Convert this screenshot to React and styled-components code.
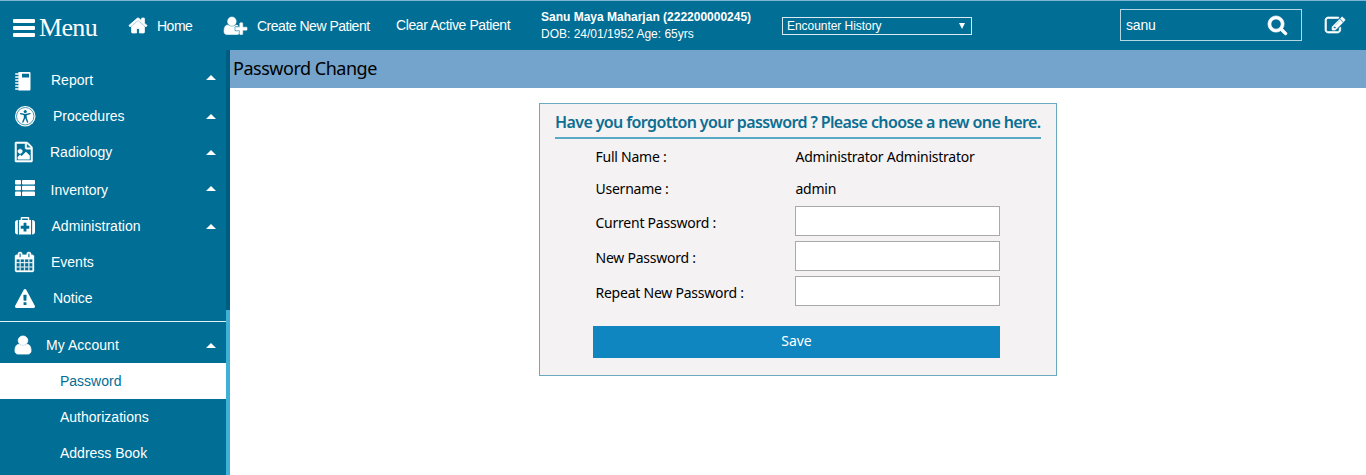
import React from "react";
import styled, { createGlobalStyle } from "styled-components";

const Global = createGlobalStyle`
  * { box-sizing: border-box; }
  body { margin: 0; background: #fff; font-family: "Liberation Sans", Arial, sans-serif; font-size: 14px; color: #000; }
`;

const uiFont = `"Noto Sans", "Open Sans", sans-serif`;

const Page = styled.div`
  display: flex;
  flex-direction: column;
  height: 475px;
  overflow: hidden;
`;

const Header = styled.header`
  display: flex;
  flex: 0 0 50px;
  height: 50px;
  align-items: flex-start;
  background: #006e95;
  border-top: 1px solid #7fb5d3;
  color: #fff;
  white-space: nowrap;
`;

const HeaderItem = styled.a`
  display: flex;
  align-items: center;
  height: 50px;
  width: ${(p) => p.$width}px;
  padding-left: ${(p) => p.$indent || 0}px;
  gap: ${(p) => p.$gap || 0}px;
  flex: none;
  letter-spacing: -0.49px;
`;

const MenuToggle = styled(HeaderItem)`
  font-family: "Liberation Serif", "Times New Roman", serif;
  font-size: 26px;
  letter-spacing: -0.65px;
  height: 54px;
`;

const HomeLink = styled(HeaderItem)`
  height: 49px;
`;

const ClearLink = styled(HeaderItem)`
  height: 48px;
  letter-spacing: -0.4px;
`;

const PatientInfo = styled.div`
  width: 241px;
  flex: none;
  padding-top: 8px;
  font-size: 12px;
  line-height: 17px;
`;

const PatientName = styled.div`
  font-weight: bold;
`;

const Encounter = styled.div`
  display: flex;
  align-items: center;
  justify-content: space-between;
  flex: none;
  width: 190px;
  height: 18px;
  margin-top: 16px;
  padding: 0 6px 0 4px;
  border: 1px solid #d9eaf1;
  font-size: 12px;
  letter-spacing: -0.05px;
`;

const SearchBox = styled.div`
  display: flex;
  align-items: center;
  justify-content: space-between;
  flex: none;
  width: 182px;
  height: 32px;
  margin: 8px 23px 0 148px;
  padding: 0 14px 0 5px;
  border: 1px solid #b5d6e3;
  letter-spacing: -0.2px;
`;

const EditLink = styled.a`
  display: flex;
  padding-top: 16px;
`;

const Glyph = styled.svg`
  display: block;
  flex: none;
  fill: currentColor;
  overflow: visible;
`;

const Body = styled.div`
  display: flex;
  flex: 1;
  min-height: 0;
`;

const Sidebar = styled.nav`
  width: 226px;
  flex: none;
  padding-top: 12px;
  background: #006e95;
  color: #fff;
`;

const ScrollTrack = styled.div`
  width: 4px;
  flex: none;
  background: #005d82;
  padding-top: 260px;
`;

const ScrollThumb = styled.div`
  height: 165px;
  background: #3fb0d8;
`;

const NavRow = styled.a`
  display: flex;
  align-items: center;
  height: ${(p) => p.$height || 36}px;
  padding: ${(p) => p.$top || 0}px 10px ${(p) => p.$bottom || 0}px 15px;
`;

const IconSlot = styled.span`
  display: flex;
  flex: none;
  width: ${(p) => p.$width}px;
  margin-top: ${(p) => p.$shift || 0}px;
`;

const NavLabel = styled.span`
  flex: 1;
  letter-spacing: ${(p) => p.$spacing || 0}px;
`;

const Caret = styled.span`
  width: 0;
  height: 0;
  margin-top: ${(p) => p.$shift || 0}px;
  border: 5px solid transparent;
  border-top-width: 0;
  border-bottom: 5px solid #fff;
`;

const Divider = styled.div`
  height: 1px;
  margin: 5px 0 6px;
  background: #e6f2f6;
`;

const SubItem = styled.a`
  display: flex;
  align-items: center;
  height: 36px;
  padding-left: 60px;
  background: ${(p) => (p.$active ? "#fff" : "transparent")};
  color: ${(p) => (p.$active ? "#006e95" : "#fff")};
`;

const Main = styled.main`
  flex: 1;
  font-family: ${uiFont};
`;

const TitleBar = styled.h1`
  height: 38px;
  margin: 0;
  padding-left: 3px;
  background: #74a3cb;
  font-size: 18px;
  font-weight: 400;
  line-height: 37px;
  letter-spacing: -0.48px;
`;

const Card = styled.form`
  width: 518px;
  height: 273px;
  margin: 15px 0 0 309px;
  padding: 0 15px;
  background: #f4f2f3;
  border: 1px solid #6aa9c0;
`;

const CardTitle = styled.h2`
  height: 35px;
  margin: 0 0 1px;
  border-bottom: 2px solid #5aa9c5;
  color: #0b6e92;
  font-size: 16px;
  font-weight: 600;
  line-height: 37px;
  letter-spacing: -0.61px;
  white-space: nowrap;
`;

const Field = styled.div`
  display: flex;
  align-items: center;
  height: ${(p) => p.$height}px;
  padding-left: 40.5px;
  letter-spacing: -0.24px;
`;

const FieldLabel = styled.label`
  width: ${(p) => p.$width || 199.5}px;
  padding-top: ${(p) => p.$drop || 0}px;
  flex: none;
`;

const Input = styled.input`
  width: 205px;
  height: 30px;
  margin-bottom: 2px;
  border: 1px solid #a9a9a9;
  background: #fff;
`;

const SaveButton = styled.button`
  display: block;
  width: 407px;
  height: 32px;
  margin: 17px 0 0 38px;
  padding: 0 0 3px;
  border: 0;
  background: #0f86bf;
  color: #fff;
  font: 14px ${uiFont};
`;

const paths = {
  home: "M1472 992v480q0 26-19 45t-45 19h-384v-384h-256v384h-384q-26 0-45-19t-19-45v-480q0-1 .5-3t.5-3l575-474 575 474q1 2 1 6zm223-69l-62 74q-8 9-21 11h-3q-13 0-21-7l-692-577-692 577q-12 8-24 7-13-2-21-11l-62-74q-8-10-7-23.5t11-21.5l719-599q32-26 76-26t76 26l244 204v-195q0-14 9-23t23-9h192q14 0 23 9t9 23v408l219 182q10 8 11 21.5t-7 23.5z",
  userPlus: "M704 896q-159 0-271.5-112.5t-112.5-271.5 112.5-271.5 271.5-112.5 271.5 112.5 112.5 271.5-112.5 271.5-271.5 112.5zm960 128h352q13 0 22.5 9.5t9.5 22.5v192q0 13-9.5 22.5t-22.5 9.5h-352v352q0 13-9.5 22.5t-22.5 9.5h-192q-13 0-22.5-9.5t-9.5-22.5v-352h-352q-13 0-22.5-9.5t-9.5-22.5v-192q0-13 9.5-22.5t22.5-9.5h352v-352q0-13 9.5-22.5t22.5-9.5h192q13 0 22.5 9.5t9.5 22.5v352zm-736 224q0 52 38 90t90 38h256v238q-68 50-171 50h-874q-121 0-194-69t-73-190q0-53 3.5-103.5t14-109 26.5-108.5 43-97.5 62-81 85.5-53.5 111.5-20q19 0 39 17 79 61 154.5 91.5t164.5 30.5 164.5-30.5 154.5-91.5q20-17 39-17 132 0 217 96h-223q-52 0-90 38t-38 90v192z",
  search: "M1216 832q0-185-131.5-316.5t-316.5-131.5-316.5 131.5-131.5 316.5 131.5 316.5 316.5 131.5 316.5-131.5 131.5-316.5zm512 832q0 52-38 90t-90 38q-54 0-90-38l-343-342q-179 124-399 124-143 0-273.5-55.5t-225-150-150-225-55.5-273.5 55.5-273.5 150-225 225-150 273.5-55.5 273.5 55.5 225 150 150 225 55.5 273.5q0 220-124 399l343 343q37 37 37 90z",
  edit: "M888 1184l116-116-152-152-116 116v56h96v96h56zm440-720q-16-16-33 1l-350 350q-17 17-1 33t33-1l350-350q17-17 1-33zm80 594v190q0 119-84.5 203.5t-203.5 84.5h-832q-119 0-203.5-84.5t-84.5-203.5v-832q0-119 84.5-203.5t203.5-84.5h832q63 0 117 25 15 7 18 23 3 17-9 29l-49 49q-14 14-32 8-23-6-45-6h-832q-66 0-113 47t-47 113v832q0 66 47 113t113 47h832q66 0 113-47t47-113v-126q0-13 9-22l64-64q15-15 35-7t20 29zm-96-738l288 288-672 672h-288v-288zm444 132l-92 92-288-288 92-92q28-28 68-28t68 28l152 152q28 28 28 68t-28 68z",
  medkit: "M1280 1120v-192q0-14-9-23t-23-9h-224v-224q0-14-9-23t-23-9h-192q-14 0-23 9t-9 23v224h-224q-14 0-23 9t-9 23v192q0 14 9 23t23 9h224v224q0 14 9 23t23 9h192q14 0 23-9t9-23v-224h224q14 0 23-9t9-23zM640 384h512v-128h-512v128zM256 384v1280h-32q-92 0-158-66t-66-158v-832q0-92 66-158t158-66h32zM1440 384v1280h-1088v-1280h160v-160q0-40 28-68t68-28h576q40 0 68 28t28 68v160h160zM1792 608v832q0 92-66 158t-158 66h-32v-1280h32q92 0 158 66t66 158z",
  warning: "M1024 1375v-190q0-14-9.5-23.5t-22.5-9.5h-192q-13 0-22.5 9.5t-9.5 23.5v190q0 14 9.5 23.5t22.5 9.5h192q13 0 22.5-9.5t9.5-23.5zm-2-374l18-459q0-12-10-19-13-11-24-11h-220q-11 0-24 11-10 7-10 21l17 457q0 10 10 16.5t24 6.5h185q14 0 23.5-6.5t10.5-16.5zm-14-934l768 1408q35 63-2 126-17 29-46.5 46t-63.5 17h-1536q-34 0-63.5-17t-46.5-46q-37-63-2-126l768-1408q17-31 47-49t65-18 65 18 47 49z",
  calendar: "M192 1664h288v-288h-288v288zm352 0h320v-288h-320v288zm-352-352h288v-320h-288v320zm352 0h320v-320h-320v320zm-352-384h288v-288h-288v288zm736 736h320v-288h-320v288zm-384-736h320v-288h-320v288zm768 736h288v-288h-288v288zm-384-352h320v-320h-320v320zm-352-864v-288q0-13-9.5-22.5t-22.5-9.5h-64q-13 0-22.5 9.5t-9.5 22.5v288q0 13 9.5 22.5t22.5 9.5h64q13 0 22.5-9.5t9.5-22.5zm736 864h288v-320h-288v320zm-384-384h320v-288h-320v288zm384 0h288v-288h-288v288zm32-480v-288q0-13-9.5-22.5t-22.5-9.5h-64q-13 0-22.5 9.5t-9.5 22.5v288q0 13 9.5 22.5t22.5 9.5h64q13 0 22.5-9.5t9.5-22.5zm384-64v1280q0 52-38 90t-90 38h-1408q-52 0-90-38t-38-90v-1280q0-52 38-90t90-38h128v-96q0-66 47-113t113-47h64q66 0 113 47t47 113v96h384v-96q0-66 47-113t113-47h64q66 0 113 47t47 113v96h128q52 0 90 38t38 90z",
  image: "M1596 380q28 28 48 76t20 88v1152q0 40-28 68t-68 28h-1344q-40 0-68-28t-28-68v-1600q0-40 28-68t68-28h896q40 0 88 20t76 48zm-444-244v376h376q-10-29-22-41l-313-313q-12-12-41-22zm384 1528v-1024h-416q-40 0-68-28t-28-68v-416h-768v1536h1280zm-128-448v320h-1024v-192l192-192 128 128 384-384zm-832-192q-80 0-136-56t-56-136 56-136 136-56 136 56 56 136-56 136-136 56z",
  user: "M1536 1399q0 109-62.5 187t-150.5 78h-854q-88 0-150.5-78t-62.5-187q0-85 8.5-160.5t31.5-152 58.5-131 94-89 134.5-34.5q131 128 313 128t313-128q76 0 134.5 34.5t94 89 58.5 131 31.5 152 8.5 160.5zm-256-887q0 159-112.5 271.5t-271.5 112.5-271.5-112.5-112.5-271.5 112.5-271.5 271.5-112.5 271.5 112.5 112.5 271.5z",
};

const Icon = ({ name, box, w, h, bold = 0 }) => (
  <Glyph viewBox={box} width={w} height={h} preserveAspectRatio="none">
    <path fillRule="evenodd" stroke="currentColor" strokeWidth={bold} d={paths[name]} />
  </Glyph>
);

const BarsIcon = () => (
  <Glyph viewBox="0 0 22 18" width="22" height="18">
    {[0, 7, 14].map((y) => (
      <rect key={y} y={y} width="22" height="4" rx="1" />
    ))}
  </Glyph>
);

const NotebookIcon = () => (
  <Glyph viewBox="0 0 16 19" width="16" height="19">
    <path fillRule="evenodd" d="M3.4 0h11.1q1 0 1 1v16.5q0 1-1 1H3.4zM7 1.8v3.7h7V1.8z" />
    {[1.2, 4.2, 7.2, 10.2, 13.2, 16.2].map((y) => (
      <rect key={y} y={y} width="4" height="1.5" rx=".7" />
    ))}
  </Glyph>
);

const AccessIcon = () => (
  <Glyph viewBox="0 0 20 20" width="20.5" height="20.5">
    <circle cx="10" cy="10" r="10" />
    <g stroke="#006e95" fill="none">
      <circle cx="10" cy="10" r="8.5" strokeWidth=".7" />
      <path d="M5.4 7.5L10 8.5l4.6-1" strokeWidth="1.3" strokeLinecap="round" />
      <path d="M10 8.4v3.2" strokeWidth="2.8" />
      <path d="M9.4 11.5L7.7 15.7M10.6 11.5l1.7 4.2" strokeWidth="1.4" strokeLinecap="round" />
    </g>
    <circle cx="10" cy="5.4" r="1.5" fill="#006e95" />
  </Glyph>
);

const ListIcon = () => (
  <Glyph viewBox="0 0 20 16" width="20" height="16">
    {[0, 5.7, 11.4].map((y) => (
      <React.Fragment key={y}>
        <rect y={y} width="6" height="4.6" rx=".8" />
        <rect x="7" y={y} width="13" height="4.6" rx=".8" />
      </React.Fragment>
    ))}
  </Glyph>
);

const navItems = [
  { label: "Report", icon: <NotebookIcon />, slot: 36, iconTop: 3, caret: -5 },
  { label: "Procedures", icon: <AccessIcon />, slot: 38, caret: 1 },
  { label: "Radiology", icon: <Icon name="image" box="128 0 1536 1792" w={17.5} h={20} bold={50} />, slot: 35, caret: 1 },
  { label: "Inventory", icon: <ListIcon />, slot: 35.5, height: 38, top: 2, iconTop: -5, caret: -3 },
  { label: "Administration", icon: <Icon name="medkit" box="0 128 1792 1536" w={20} h={17.5} />, slot: 36.5, caret: 1, spacing: 0.03 },
  { label: "Events", icon: <Icon name="calendar" box="64 0 1664 1792" w={19} h={20} bold={30} />, slot: 36 },
  { label: "Notice", icon: <Icon name="warning" box="0 0 1792 1664" w={20} h={19} />, slot: 38, spacing: -0.05 },
];

const NavItem = ({ item }) => (
  <NavRow $height={item.height} $top={item.top} $bottom={item.bottom}>
    <IconSlot $width={item.slot} $shift={item.iconTop}>{item.icon}</IconSlot>
    <NavLabel $spacing={item.spacing}>{item.label}</NavLabel>
    {item.caret !== undefined && <Caret $shift={item.caret} />}
  </NavRow>
);

const account = {
  label: "My Account",
  icon: <Icon name="user" box="256 128 1280 1536" w={16} h={18} bold={70} />,
  slot: 31,
  caret: 2,
  height: 35,
  bottom: 2,
  spacing: 0.05,
};

export default function App() {
  return (
    <>
      <Global />
      <Page>
        <Header>
          <MenuToggle $width={129} $indent={13} $gap={4}><BarsIcon />Menu</MenuToggle>
          <HomeLink $width={95} $gap={10}>
            <Icon name="home" box="90 250 1612 1290" w={18} h={15} bold={70} />Home
          </HomeLink>
          <HeaderItem $width={172} $gap={10}>
            <Icon name="userPlus" box="0 128 2048 1536" w={23} h={17.5} bold={50} />Create New Patient
          </HeaderItem>
          <ClearLink $width={145}>Clear Active Patient</ClearLink>
          <PatientInfo>
            <PatientName>Sanu Maya Maharjan (222200000245)</PatientName>
            <div>DOB: 24/01/1952 Age: 65yrs</div>
          </PatientInfo>
          <Encounter>
            Encounter History
            <Glyph viewBox="0 0 6 6" width="6" height="6"><path d="M0 0h6L3 6z" /></Glyph>
          </Encounter>
          <SearchBox>
            sanu
            <Icon name="search" box="64 128 1664 1664" w={19} h={19} bold={60} />
          </SearchBox>
          <EditLink><Icon name="edit" box="0 128 1792 1408" w={20} h={16} bold={60} /></EditLink>
        </Header>
        <Body>
          <Sidebar>
            {navItems.map((item) => <NavItem key={item.label} item={item} />)}
            <Divider />
            <NavItem item={account} />
            <SubItem $active>Password</SubItem>
            <SubItem>Authorizations</SubItem>
            <SubItem>Address Book</SubItem>
          </Sidebar>
          <ScrollTrack><ScrollThumb /></ScrollTrack>
          <Main>
            <TitleBar>Password Change</TitleBar>
            <Card>
              <CardTitle>Have you forgotton your password ? Please choose a new one here.</CardTitle>
              <Field $height={32}><FieldLabel $width={200}>Full Name :</FieldLabel>Administrator Administrator</Field>
              <Field $height={32}><FieldLabel $width={200}>Username :</FieldLabel>admin</Field>
              <Field $height={35}><FieldLabel $drop={2}>Current Password :</FieldLabel><Input type="password" /></Field>
              <Field $height={35}><FieldLabel $drop={2}>New Password :</FieldLabel><Input type="password" /></Field>
              <Field $height={35}><FieldLabel $drop={2}>Repeat New Password :</FieldLabel><Input type="password" /></Field>
              <SaveButton type="button">Save</SaveButton>
            </Card>
          </Main>
        </Body>
      </Page>
    </>
  );
}
